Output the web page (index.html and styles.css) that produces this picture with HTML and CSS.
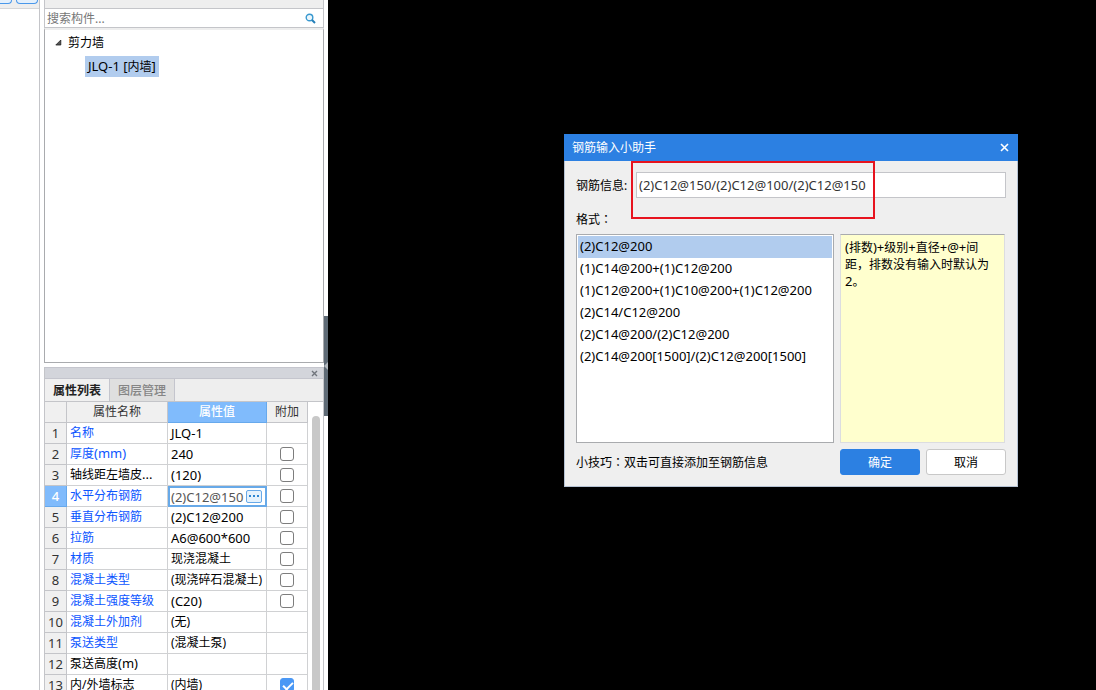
FILE: index.html
```html
<!DOCTYPE html>
<html lang="zh-CN">
<head>
<meta charset="utf-8">
<title>钢筋输入小助手</title>
<link rel="stylesheet" href="styles.css">
</head>
<body>
<div class="app">
  <div class="rail">
    <div class="rail-tools"><button type="button" class="rail-button" aria-label="工具一"></button><button type="button" class="rail-button wide" aria-label="工具二"></button></div>
  </div>
  <aside class="side">
    <section class="components">
      <div class="components-head"></div>
      <div class="search">
        <input type="text" class="search-input" placeholder="搜索构件..." aria-label="搜索构件">
        <svg class="search-icon" viewBox="0 0 11 11" aria-hidden="true"><circle cx="4.5" cy="4.5" r="3.3" fill="#eaf6fc" stroke="#3998cf" stroke-width="1.4"/><path d="M7 7l3 3" stroke="#257fb8" stroke-width="2"/></svg>
      </div>
      <div class="tree">
        <div class="tree-row"><svg class="tree-arrow" viewBox="0 0 7 7" aria-hidden="true"><path d="M5.8 1v5H.8z" fill="#555" stroke="#222" stroke-width=".8"/></svg><span>剪力墙</span></div>
        <div class="tree-row child"><span class="selected"><span class="latin">JLQ-1 [</span>内墙<span class="latin">]</span></span></div>
      </div>
    </section>
    <section class="properties">
      <div class="dock-bar"><button type="button" class="dock-close" aria-label="关闭"><svg viewBox="0 0 7 7"><path d="M1 1l5 5M6 1L1 6" stroke="#70757c" stroke-width="1.4"/></svg></button></div>
      <div class="tabs"><button type="button" class="tab active">属性列表</button><button type="button" class="tab">图层管理</button></div>
      <div class="sheet">
        <table class="grid">
          <colgroup><col class="c-num"><col class="c-name"><col class="c-value"><col class="c-extra"></colgroup>
          <thead><tr><th></th><th>属性名称</th><th class="current">属性值</th><th>附加</th></tr></thead>
          <tbody>
            <tr><th>1</th><td class="link">名称</td><td class="latin">JLQ-1</td><td></td></tr>
            <tr><th>2</th><td class="link">厚度<span class="latin">(mm)</span></td><td class="latin">240</td><td class="tick"><input type="checkbox" aria-label="附加 厚度"></td></tr>
            <tr><th>3</th><td>轴线距左墙皮<span class="latin">...</span></td><td class="latin">(120)</td><td class="tick"><input type="checkbox" aria-label="附加 轴线距左墙皮"></td></tr>
            <tr><th class="current">4</th><td class="link">水平分布钢筋</td><td class="editing"><div class="editor"><input type="text" class="cell-input" value="(2)C12@150" aria-label="水平分布钢筋"><button type="button" class="more" aria-label="更多"><svg viewBox="0 0 14 11"><path d="M2 4h2v2H2zM6 4h2v2H6zM10 4h2v2h-2z" fill="#2c86d2"/></svg></button></div></td><td class="tick"><input type="checkbox" aria-label="附加 水平分布钢筋"></td></tr>
            <tr><th>5</th><td class="link">垂直分布钢筋</td><td class="latin">(2)C12@200</td><td class="tick"><input type="checkbox" aria-label="附加 垂直分布钢筋"></td></tr>
            <tr><th>6</th><td class="link">拉筋</td><td class="latin">A6@600*600</td><td class="tick"><input type="checkbox" aria-label="附加 拉筋"></td></tr>
            <tr><th>7</th><td class="link">材质</td><td>现浇混凝土</td><td class="tick"><input type="checkbox" aria-label="附加 材质"></td></tr>
            <tr><th>8</th><td class="link">混凝土类型</td><td>(现浇碎石混凝土)</td><td class="tick"><input type="checkbox" aria-label="附加 混凝土类型"></td></tr>
            <tr><th>9</th><td class="link">混凝土强度等级</td><td class="latin">(C20)</td><td class="tick"><input type="checkbox" aria-label="附加 混凝土强度等级"></td></tr>
            <tr><th>10</th><td class="link">混凝土外加剂</td><td>(无)</td><td></td></tr>
            <tr><th>11</th><td class="link">泵送类型</td><td>(混凝土泵)</td><td></td></tr>
            <tr><th>12</th><td>泵送高度<span class="latin">(m)</span></td><td></td><td></td></tr>
            <tr><th>13</th><td>内/外墙标志</td><td>(内墙)</td><td class="tick"><input type="checkbox" checked aria-label="附加 内外墙标志"></td></tr>
          </tbody>
        </table>
        <div class="scroll"><div class="thumb"></div></div>
      </div>
    </section>
  </aside>
  <div class="splitter"><button type="button" class="handle" aria-label="收起面板"><svg viewBox="0 0 4 8"><path d="M4 0v8L0 4z" fill="#b4bac0"/></svg></button></div>
  <main class="canvas">
    <div class="dialog" role="dialog" aria-labelledby="dialog-title">
      <header class="dialog-head"><h1 id="dialog-title">钢筋输入小助手</h1><button type="button" class="dialog-close" aria-label="关闭"><svg viewBox="0 0 9 9"><path d="M1 1l7 7M8 1L1 8" stroke="#fff" stroke-width="1.6"/></svg></button></header>
      <div class="dialog-body">
        <div class="field"><label for="rebar">钢筋信息:</label><input type="text" id="rebar" value="(2)C12@150/(2)C12@100/(2)C12@150"></div>
        <div class="format-label">格式<span class="mid" lang="zh-TW">：</span></div>
        <div class="panes">
          <ul class="formats">
            <li class="picked">(2)C12@200</li>
            <li>(1)C14@200+(1)C12@200</li>
            <li>(1)C12@200+(1)C10@200+(1)C12@200</li>
            <li>(2)C14/C12@200</li>
            <li>(2)C14@200/(2)C12@200</li>
            <li>(2)C14@200[1500]/(2)C12@200[1500]</li>
          </ul>
          <p class="hint"><span class="latin">(</span>排数<span class="latin">)+</span>级别<span class="latin">+</span>直径<span class="latin">+@+</span>间距，排数没有输入时默认为<span class="latin">2</span>。</p>
        </div>
        <footer class="actions"><span class="tip">小技巧<span class="mid" lang="zh-TW">：</span>双击可直接添加至钢筋信息</span><button type="button" class="btn primary">确定</button><button type="button" class="btn">取消</button></footer>
      </div>
      <div class="marker"></div>
    </div>
  </main>
</div>
</body>
</html>
```

FILE: styles.css
```css
* { box-sizing: border-box; }
body {
  margin: 0;
  overflow: hidden;
  color: #000;
  font: 12px/17px "Noto Sans", "Noto Sans CJK SC", sans-serif;
}
button, input { font: inherit; color: inherit; margin: 0; }
button { padding: 0; border: 0; background: none; }
input[type="text"] { min-width: 0; outline: 0; }
svg { display: block; }
.latin { font-size: 13px; }
span.latin { line-height: 1; }
.mid { font-family: "Noto Sans CJK TC", sans-serif; line-height: 1; }

.app { display: flex; height: 100vh; background: #fff; }
.rail { flex: 0 0 40px; border-right: 1px solid #c4c5c9; }
.rail-tools {
  display: flex;
  gap: 4px;
  height: 9px;
  background: #eee;
  border-bottom: 1px solid #d5d6d8;
}
.rail-button {
  width: 12px;
  height: 4px;
  border: 1px solid #4a98ea;
  border-top: 0;
  border-left: 0;
  border-radius: 0 0 4px 0;
  background: #e4f0fc;
}
.rail-button.wide { width: 22px; border-left: 1px solid #4a98ea; border-radius: 0 0 4px 4px; }

.side { flex: 0 0 284px; display: flex; flex-direction: column; gap: 4px; padding-left: 4px; }
.components { flex: 1; min-height: 0; display: flex; flex-direction: column; }
.components-head { height: 9px; background: #eee; border: 1px solid #c4c5c9; border-top: 0; }
.search {
  display: flex;
  align-items: center;
  height: 19px;
  padding-right: 7px;
  border: 1px solid #c4c5c9;
  border-top: 0;
}
.search-input { flex: 1; height: 18px; padding: 0 2px; border: 0; background: none; }
.search-input::placeholder { color: #777; opacity: 1; }
.search-icon { width: 11px; height: 11px; }
.tree { flex: 1; border: 1px solid #a9abae; border-top: 2px solid #eee; }
.tree-row { display: flex; align-items: center; gap: 6px; height: 24px; padding-left: 10px; }
.tree-arrow { width: 7px; height: 7px; }
.tree-row.child { padding-left: 40px; }
.selected { height: 21px; padding: 0 3px; line-height: 22px; white-space: nowrap; background: #b1ccee; }

.properties { flex: 0 0 323px; min-height: 0; overflow: hidden; border-left: 1px solid #c4c5c9; border-right: 1px solid #c4c5c9; }
.dock-bar {
  display: flex;
  justify-content: flex-end;
  align-items: center;
  height: 12px;
  padding-right: 5px;
  background: #d3d5db;
  border: 1px solid #c4c5cd;
  border-width: 1px 0;
}
.dock-close svg { width: 7px; height: 7px; }
.tabs { display: flex; height: 23px; background: #eee; border-bottom: 1px solid #c4c5c9; }
.tab { width: 65px; color: #858585; font-weight: 500; background: #dfdfdf; border-right: 1px solid #c4c5cd; }
.tab.active { color: #222; font-weight: 700; background: #f0f0f0; }
.sheet { display: flex; align-items: flex-start; gap: 4px; }
.grid { width: 263px; table-layout: fixed; border-collapse: separate; border-spacing: 0; }
.c-num { width: 22px; }
.c-name { width: 101px; }
.c-value { width: 99px; }
.c-extra { width: 41px; }
.grid th, .grid td {
  height: 21px;
  padding: 0;
  line-height: 20px;
  vertical-align: middle;
  white-space: nowrap;
  overflow: hidden;
  border: 1px solid #d0d1d3;
  border-width: 0 1px 1px 0;
}
.grid td { padding-left: 3px; text-align: left; }
.grid th { color: #333; font-weight: 400; text-align: center; background: #f0f0f0; border-color: #c4c5c9; }
.grid tbody th { font-size: 13px; }
.grid th.current { color: #fff; font-weight: 500; background: #80bbfc; border-color: #67a9ec; }
.grid .link { color: #0b55ff; }
.grid .tick { padding: 0; text-align: center; }
.tick input {
  display: block;
  appearance: none;
  width: 14px;
  height: 14px;
  margin: 0 auto;
  border: 1px solid #7d7d7d;
  border-radius: 3px;
  background: #fff;
}
.tick input:checked {
  border-color: #4a98f5;
  background: #4a98f5;
  position: relative;
}
.tick input:checked::after {
  content: "";
  position: absolute;
  left: 4px;
  top: 1px;
  width: 4px;
  height: 8px;
  border: solid #fff;
  border-width: 0 2px 2px 0;
  transform: rotate(45deg);
}
.grid .editing { padding: 0; border: 0; }
.editor { display: flex; align-items: center; height: 21px; padding-right: 3px; border: 2px solid #67a9e8; }
.cell-input { flex: 1; width: 0; height: 17px; padding: 0 1px; border: 0; color: #555; font-size: 13px; }
.more { width: 16px; height: 13px; border: 1px solid #67a9e8; border-radius: 2px; background: #e5f2fd; }
.scroll { width: 8px; padding-top: 14px; }
.thumb { height: 290px; border-radius: 4px; background: #c8c8c8; }

.splitter { flex: 0 0 4px; display: flex; flex-direction: column; padding-top: 316px; }
.handle { display: flex; align-items: center; height: 100px; background: #5f6b76; }
.handle svg { width: 4px; height: 8px; }

.canvas { flex: 1; position: relative; background: #000; }
.dialog {
  position: absolute;
  left: 236px;
  top: 134px;
  width: 454px;
  background: #efefef;
}
.dialog-head {
  display: flex;
  align-items: center;
  justify-content: space-between;
  height: 27px;
  padding: 0 9px 0 8px;
  color: #fff;
  background: #2c80e2;
}
.dialog-head h1 { margin: 0; font-size: 12px; font-weight: 400; }
.dialog-close svg { width: 9px; height: 9px; }
.dialog-body { padding: 11px; border: 1px solid #b5c2d3; border-top: 0; }
.field { display: flex; align-items: center; gap: 8px; height: 26px; }
.field label { width: 52px; white-space: nowrap; }
.field input { flex: 1; height: 26px; padding: 0 2px; color: #333; font-size: 13px; background: #fff; border: 1px solid #c4c5c9; }
.format-label { height: 36px; padding-top: 13px; }
.panes { display: flex; gap: 6px; height: 209px; }
.formats { flex: 0 0 258px; margin: 0; padding: 1px; list-style: none; font-size: 13px; background: #fff; border: 1px solid #a9abae; }
.formats li { height: 22px; padding-left: 2px; line-height: 21px; }
.formats .picked { background: #b1ccee; }
.hint { flex: 0 0 165px; margin: 0; padding: 4px 14px 4px 4px; background: #ffffce; border: 1px solid #dcdde0; border-top-color: #a9abae; }
.actions { display: flex; align-items: center; gap: 6px; padding-top: 6px; }
.tip { flex: 1; }
.btn { width: 80px; height: 26px; border: 1px solid #c8c8c8; border-radius: 3px; background: #fff; }
.btn.primary { color: #fff; border-color: #2c80e2; background: #2c80e2; }
.marker {
  position: absolute;
  left: 67px;
  top: 27px;
  width: 244px;
  height: 58px;
  border: 2px solid #e7131e;
  pointer-events: none;
}
```
